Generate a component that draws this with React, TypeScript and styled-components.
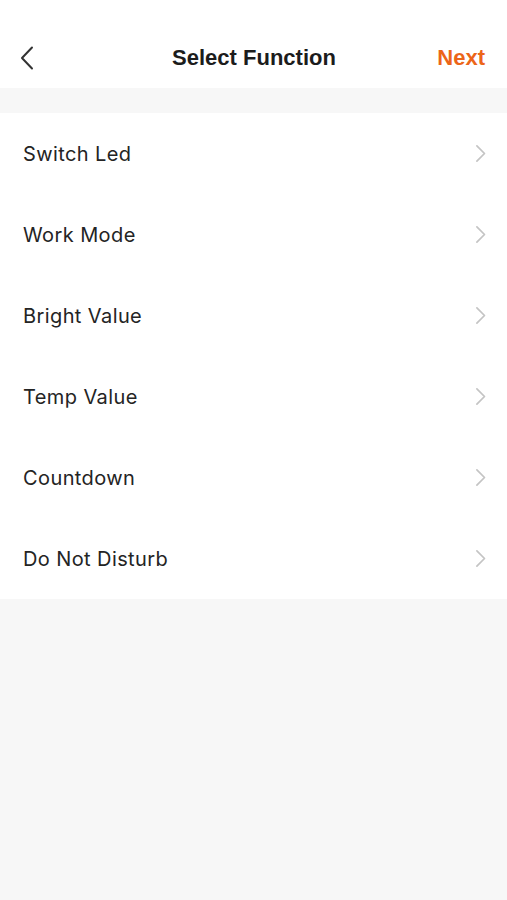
import React from "react";
import styled, { createGlobalStyle } from "styled-components";

const GlobalStyle = createGlobalStyle`
  html, body {
    margin: 0;
    padding: 0;
    background: #f7f7f7;
    font-family: "Liberation Sans", Arial, sans-serif;
  }
`;

const Page = styled.div`
  min-height: 900px;
  background: #f7f7f7;
  display: flex;
  flex-direction: column;
`;

const NavBar = styled.div`
  height: 88px;
  background: #fff;
  display: grid;
  grid-template-columns: 100px 1fr 100px;
  align-items: center;
  padding: 28px 22px 0 19px;
  box-sizing: border-box;
`;

const BackButton = styled.button`
  border: none;
  background: none;
  padding: 0;
  width: 24px;
  height: 28px;
  display: flex;
  align-items: center;
  cursor: pointer;
`;

const Title = styled.div`
  text-align: center;
  font-size: 22px;
  font-weight: 600;
  color: #1c1c1c;
  padding-left: 4px;
`;

const NextLink = styled.button`
  justify-self: end;
  border: none;
  background: none;
  padding: 0;
  font-family: inherit;
  font-size: 22px;
  font-weight: 600;
  color: #ec6519;
  cursor: pointer;
`;

const List = styled.div`
  margin-top: 25px;
  background: #fff;
`;

const Row = styled.div`
  height: 81px;
  display: flex;
  align-items: center;
  justify-content: space-between;
  padding: 0 21px 0 23px;
  box-sizing: border-box;
`;

const Label = styled.span`
  font-family: Inter, "Liberation Sans", sans-serif;
  font-size: 20px;
  letter-spacing: 0.4px;
  color: #242424;
`;

const Chevron = ({ color, size }: { color: string; size: number }) => (
  <svg width={size * 0.6} height={size} viewBox="0 0 12 20" fill="none">
    <path d="M2 2 L10 10 L2 18" stroke={color} strokeWidth="1.8" strokeLinecap="round" strokeLinejoin="round" />
  </svg>
);

const BackIcon = () => (
  <svg width="16" height="26" viewBox="0 0 16 26" fill="none">
    <path d="M13 2.5 L3 13 L13 23.5" stroke="#333" strokeWidth="2" strokeLinecap="round" strokeLinejoin="round" />
  </svg>
);

const functions = ["Switch Led", "Work Mode", "Bright Value", "Temp Value", "Countdown", "Do Not Disturb"];

export default function App() {
  return (
    <Page>
      <GlobalStyle />
      <NavBar>
        <BackButton>
          <BackIcon />
        </BackButton>
        <Title>Select Function</Title>
        <NextLink>Next</NextLink>
      </NavBar>
      <List>
        {functions.map((f) => (
          <Row key={f}>
            <Label>{f}</Label>
            <Chevron color="#c4c4c4" size={19} />
          </Row>
        ))}
      </List>
    </Page>
  );
}
